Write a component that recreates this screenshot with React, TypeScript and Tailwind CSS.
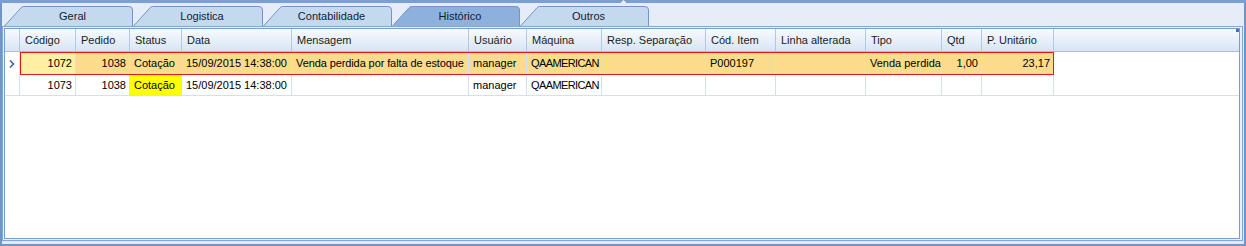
import React from 'react';

type Col = { label: string; w: number; right?: boolean };

const cols: Col[] = [
  { label: 'Código', w: 56, right: true },
  { label: 'Pedido', w: 54, right: true },
  { label: 'Status', w: 52 },
  { label: 'Data', w: 110 },
  { label: 'Mensagem', w: 177 },
  { label: 'Usuário', w: 58 },
  { label: 'Máquina', w: 75 },
  { label: 'Resp. Separação', w: 104 },
  { label: 'Cód. Item', w: 70 },
  { label: 'Linha alterada', w: 90 },
  { label: 'Tipo', w: 76 },
  { label: 'Qtd', w: 40, right: true },
  { label: 'P. Unitário', w: 72, right: true },
];

const rows: string[][] = [
  ['1072', '1038', 'Cotação', '15/09/2015 14:38:00', 'Venda perdida por falta de estoque', 'manager', 'QAAMERICAN', '', 'P000197', '', 'Venda perdida', '1,00', '23,17'],
  ['1073', '1038', 'Cotação', '15/09/2015 14:38:00', '', 'manager', 'QAAMERICAN', '', '', '', '', '', ''],
];

const tabs = [
  { label: 'Geral', w: 129 },
  { label: 'Logistica', w: 130 },
  { label: 'Contabilidade', w: 129 },
  { label: 'Histórico', w: 128, active: true },
  { label: 'Outros', w: 129 },
];

const Tab: React.FC<{ label: string; w: number; active?: boolean }> = ({ label, w, active }) => (
  <div className="relative h-[20px] shrink-0" style={{ width: w }}>
    <svg className="absolute inset-0" width={w} height={20} viewBox={`0 0 ${w} 20`}>
      <path
        d={`M0.5 20 L17 1.8 Q18 0.5 19.5 0.5 L${w - 4} 0.5 Q${w - 0.5} 0.5 ${w - 0.5} 4 L${w - 0.5} 20`}
        fill={active ? '#8db0dd' : '#c4d8ee'}
        stroke="#7295c8"
        strokeWidth={1}
      />
    </svg>
    <div className="relative h-full flex items-center justify-center pl-[8px] text-[11px] text-[#101d33] leading-none">
      {label}
    </div>
  </div>
);

export default function App() {
  return (
    <div
      className="w-[1246px] h-[246px] flex flex-col bg-[#e3ecf7] text-[11px] text-black"
      style={{ fontFamily: '"Liberation Sans", Arial, sans-serif' }}
    >
      {/* top bar */}
      <div className="relative h-[3px] bg-[#7b9ed3] shrink-0">
        <svg className="absolute left-[620px] top-0" width="7" height="3" viewBox="0 0 7 3">
          <path d="M0.5 3 L3.5 0 L6.5 3 Z" fill="#eef3fb" />
        </svg>
      </div>

      <div className="flex-1 flex flex-col border-x-2 border-b-2 border-[#7194c8] pb-[3px] pr-[1px] bg-gradient-to-b from-[#e4edf8] to-[#dfe8f5]">
        {/* tabs */}
        <div className="h-[23px] flex items-end pl-[2px] shrink-0">
          {tabs.map((t) => (
            <Tab key={t.label} {...t} />
          ))}
        </div>

        {/* panel */}
        <div className="flex-1 flex flex-col border border-[#86a6d6] pt-[1px] pb-[1px] pl-[1px] pr-[2px] bg-[#e9f0f9]">
          <div className="flex-1 flex flex-col border border-[#7b9cd0] bg-white overflow-hidden">
            {/* header */}
            <div className="flex h-[23px] shrink-0 border-b border-[#a7c0e0] bg-gradient-to-b from-[#f7faff] to-[#d8e5f6]">
              <div className="w-[15px] shrink-0 border-r border-[#b4c8e3]" />
              {cols.map((c) => (
                <div
                  key={c.label}
                  className="shrink-0 border-r border-[#b4c8e3] pl-[5px] flex items-center text-[#1b1b1b] whitespace-nowrap"
                  style={{ width: c.w }}
                >
                  {c.label}
                </div>
              ))}
              <div className="flex-1 relative">
                <div className="absolute right-0 top-0 w-[3px] h-[3px] bg-[#4b6fa6]" />
              </div>
            </div>

            {/* rows */}
            {rows.map((r, ri) => {
              const selected = ri === 0;
              return (
                <div
                  key={ri}
                  className={`relative flex shrink-0 ${selected ? 'h-[23px]' : 'h-[21px] border-b border-[#d3e0f0]'}`}
                >
                  <div className="w-[15px] shrink-0 border-r border-[#d3e0f0] flex items-center justify-center">
                    {selected && (
                      <svg width="6" height="8" viewBox="0 0 6 8">
                        <path d="M1 0.5 L4.5 4 L1 7.5" fill="none" stroke="#3a67a6" strokeWidth="1.6" />
                      </svg>
                    )}
                  </div>
                  {cols.map((c, ci) => {
                    let bg = '';
                    if (selected) bg = ci === 0 ? 'bg-[#fdf0a2]' : 'bg-[#fbdb8c]';
                    else if (ci === 2) bg = 'bg-[#ffff00]';
                    return (
                      <div
                        key={c.label}
                        className={`shrink-0 border-r border-[#d3e0f0] flex items-center whitespace-nowrap overflow-hidden ${bg} ${
                          c.right ? 'justify-end pr-[3px]' : 'pl-[4px]'
                        } ${ci === 6 ? 'tracking-[-0.6px]' : ci === 4 ? 'tracking-[-0.1px]' : ''}`}
                        style={{ width: c.w }}
                      >
                        {r[ci]}
                      </div>
                    );
                  })}
                  {selected && (
                    <div className="absolute left-[15px] top-0 w-[1034px] h-full border border-[#e8161f] pointer-events-none" />
                  )}
                </div>
              );
            })}
          </div>
        </div>
      </div>
    </div>
  );
}
